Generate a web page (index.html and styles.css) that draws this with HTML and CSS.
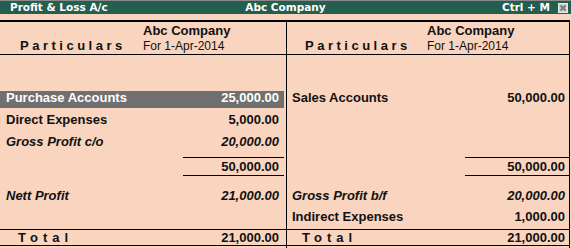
FILE: index.html
```html
<!DOCTYPE html>
<html>
<head>
<meta charset="utf-8" />
<title>Profit &amp; Loss A/c</title>
<link rel="stylesheet" href="styles.css">
</head>
<body>
<div class="title-bar">
  <span class="title-left">Profit &amp; Loss A/c</span>
  <span class="title-mid">Abc Company</span>
  <span class="title-right">Ctrl + M
    <span class="close-btn">
      <svg width="10" height="10" viewBox="0 0 10 10"><rect x="0.5" y="0.5" width="9" height="9" fill="#d2d2d2" stroke="#e8e8e8"/><path d="M2.5 2.5 L7.5 7.5 M7.5 2.5 L2.5 7.5" stroke="#7a7a7a" stroke-width="2"/></svg>
    </span>
  </span>
</div>
<div class="report">
  <div class="side side-left">
    <div class="head">
      <span class="particulars">Particulars</span>
      <div class="company"><b>Abc Company</b><span>For 1-Apr-2014</span></div>
    </div>
    <div class="blank"></div>
    <div class="row row-first selected"><span class="name">Purchase Accounts</span><span class="amt">25,000.00</span></div>
    <div class="row row-second"><span class="name">Direct Expenses</span><span class="amt">5,000.00</span></div>
    <div class="row row-third italic"><span class="name">Gross Profit c/o</span><span class="amt">20,000.00</span></div>
    <div class="row sub"><span class="name"></span><span class="amt">50,000.00</span></div>
    <div class="row row-nett italic"><span class="name">Nett Profit</span><span class="amt">21,000.00</span></div>
    <div class="row row-ind"><span class="name"></span><span class="amt"></span></div>
    <div class="row total"><span class="name">Total</span><span class="amt">21,000.00</span></div>
  </div>
  <div class="side side-right">
    <div class="head">
      <span class="particulars">Particulars</span>
      <div class="company"><b>Abc Company</b><span>For 1-Apr-2014</span></div>
    </div>
    <div class="blank"></div>
    <div class="row row-first"><span class="name">Sales Accounts</span><span class="amt">50,000.00</span></div>
    <div class="row row-second"><span class="name"></span><span class="amt"></span></div>
    <div class="row row-third"><span class="name"></span><span class="amt"></span></div>
    <div class="row sub"><span class="name"></span><span class="amt">50,000.00</span></div>
    <div class="row row-nett italic"><span class="name">Gross Profit b/f</span><span class="amt">20,000.00</span></div>
    <div class="row row-ind"><span class="name">Indirect Expenses</span><span class="amt">1,000.00</span></div>
    <div class="row total"><span class="name">Total</span><span class="amt">21,000.00</span></div>
  </div>
</div>
</body>
</html>
```

FILE: styles.css
```css
*{margin:0; padding:0; box-sizing:border-box;}
body{
	width:571px;
	height:248px;
	overflow:hidden;
	background:#f9d4bf;
	color:#111;
	font-family:"Liberation Sans", Arial, sans-serif;
}
/* title bar */
.title-bar{
	display:grid;
	grid-template-columns:1fr auto 1fr;
	align-items:center;
	height:14px;
	border-top:1px solid #8a8a8a;
	background:#245e4e;
	color:#fff;
	font:bold 10.5px "DejaVu Sans", sans-serif;
	line-height:13px;
}
.title-left{padding-left:10px;}
.title-right{
	display:flex;
	justify-content:flex-end;
	align-items:center;
	gap:8px;
	padding-right:3px;
}
.close-btn{display:flex; width:10px; height:10px;}
/* report */
.report{
	display:flex;
	width:570px;
	margin-top:6px;
	border-top:2px solid #000;
}
.side{
	height:226px;
	border-right:1px solid #000;
}
.side-left{width:287px;}
.side-right{width:283px;}
.head{
	display:flex;
	height:33px;
	border-bottom:1px solid #000;
}
.particulars{
	align-self:flex-end;
	width:143px;
	padding-left:20px;
	line-height:16px;
	font-size:13px;
	font-weight:bold;
	letter-spacing:3.5px;
}
.side-right .particulars{width:140px; padding-left:18px;}
.company{
	display:flex;
	flex-direction:column;
	padding-top:1px;
}
.company b{font-size:13px; line-height:16px;}
.company span{font-size:12px; line-height:15px;}
.blank{height:36px;}
/* rows */
.row{
	display:flex;
	font-size:13px;
	font-weight:bold;
	white-space:nowrap;
}
.name{flex:1; padding-left:6px;}
.amt{text-align:right;}
.side-left .row{margin-right:2px;}
.side-left .amt{width:101px; padding-right:5px;}
.side-right .name{padding-left:5px;}
.side-right .amt{width:104px; padding-right:4px;}
.selected{background:#707070; color:#fff;}
.italic{font-style:italic;}
.row-first{height:17px; line-height:13px;}
.row-second{height:23px; line-height:22px; padding-top:1px;}
.row-third{height:26px; line-height:21px;}
.sub{height:19px; line-height:17px;}
.sub .amt{border-top:1px solid #000; border-bottom:1px solid #000;}
.row-nett{height:30px; line-height:21px; padding-top:9px;}
.row-ind{height:23px; line-height:21px;}
.total{
	height:17px;
	line-height:15px;
	border-top:1px solid #000;
	border-bottom:1px solid #000;
}
.side-left .total{margin-right:0; padding-right:2px;}
.total .name{padding-left:18px; letter-spacing:5px;}
.side-right .total .name{padding-left:15px;}
```
